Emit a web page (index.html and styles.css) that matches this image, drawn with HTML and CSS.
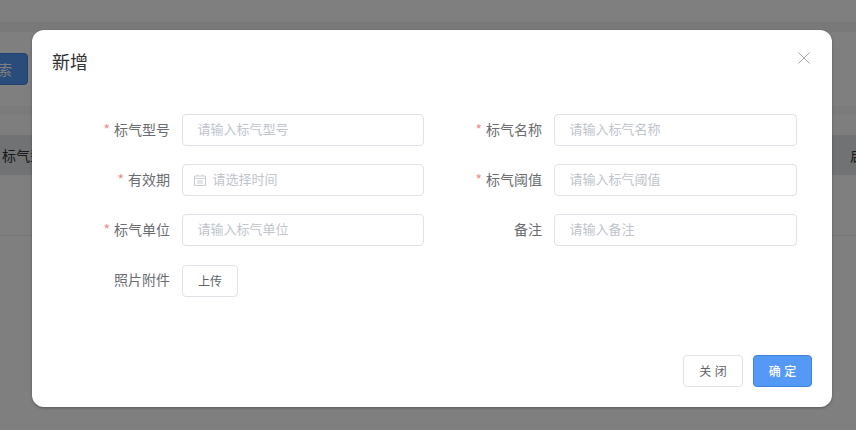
FILE: index.html
```html
<!DOCTYPE html>
<html lang="zh-CN">
<head>
<meta charset="utf-8">
<title>新增</title>
<link rel="stylesheet" href="styles.css">
</head>
<body>
<div class="page">
  <div class="topbar"></div>
  <div class="tabs"></div>
  <div class="toolbar"><button class="search-btn">搜索</button></div>
  <div class="divider"></div>
  <div class="table-gap"></div>
  <div class="table-head"><span class="th-left">标气型号</span><span class="th-right">启用状态</span></div>
  <div class="table-row"></div>
</div>
<div class="overlay"></div>
<div class="modal">
  <header class="modal-head">
    <h2 class="modal-title">新增</h2>
    <svg class="close-icon" width="12" height="12" viewBox="0 0 12 12"><path d="M.5.5l11 11M11.500.5l-11 11" stroke="#a3a6ab" stroke-width="1" fill="none"/></svg>
  </header>
  <form class="form">
    <div class="field"><label class="label req">标气型号</label><div class="input"><span class="ph">请输入标气型号</span></div></div>
    <div class="field"><label class="label req">标气名称</label><div class="input"><span class="ph">请输入标气名称</span></div></div>
    <div class="field"><label class="label req">有效期</label><div class="input date">
      <svg class="cal-icon" width="12" height="12" viewBox="0 0 12 12"><path d="M.5 2h11v9.500H.5zM.5 4.500h11M3.500.5V2M8.500.5V2M3 7h6M3 9h6" stroke="#c8cbd0" stroke-width="1" fill="none"/></svg>
      <span class="ph">请选择时间</span></div></div>
    <div class="field"><label class="label req">标气阈值</label><div class="input"><span class="ph">请输入标气阈值</span></div></div>
    <div class="field"><label class="label req">标气单位</label><div class="input"><span class="ph">请输入标气单位</span></div></div>
    <div class="field"><label class="label">备注</label><div class="input"><span class="ph">请输入备注</span></div></div>
    <div class="field"><label class="label">照片附件</label><button type="button" class="upload">上传</button></div>
  </form>
  <footer class="modal-foot">
    <button class="btn">关 闭</button>
    <button class="btn primary">确 定</button>
  </footer>
</div>
</body>
</html>
```
FILE: styles.css
```css
* { box-sizing: border-box; }
html, body { margin: 0; height: 100%; overflow: hidden; }
body {
  background: #fff;
  font-family: "Noto Sans CJK SC", "Liberation Sans", sans-serif;
  font-size: 14px;
  color: #606266;
}
.page { width: 856px; height: 430px; overflow: hidden; }
.topbar { height: 22px; background: #fff; }
.tabs { height: 10px; background: #f2f3f3; }
.toolbar {
  height: 74px;
  padding-top: 21px;
  background: #fff;
}
.search-btn {
  display: block;
  width: 60px;
  height: 32px;
  margin-left: -32px;
  background: #5399f5;
  border: 1px solid #3f82dc;
  border-radius: 4px;
  color: #fff;
  font: inherit;
  padding: 0;
  text-align: center;
}
.divider { height: 9px; background: #f6f6f6; }
.table-gap { height: 20px; background: #fcfcfc; }
.table-head {
  height: 40px;
  background: #e0e4e9;
  color: #333;
  display: flex;
  justify-content: space-between;
  align-items: center;
  padding-left: 2px;
  white-space: nowrap;
  line-height: 38px;
}
.th-right { margin-right: -50px; }
.table-row { height: 61px; background: #fff; border-bottom: 1px solid #e8e8e8; }
.overlay { position: absolute; inset: 0; background: rgba(0, 0, 0, .5); }
.modal {
  position: absolute;
  left: 32px;
  top: 30px;
  width: 800px;
  height: 377px;
  background: #fff;
  border-radius: 12px;
  box-shadow: 0 1px 3px rgba(0, 0, 0, .3);
  display: flex;
  flex-direction: column;
}
.modal-head {
  position: relative;
  height: 84px;
  padding: 18px 20px 0;
}
.modal-title {
  margin: 0;
  font-size: 18px;
  font-weight: 400;
  line-height: 26px;
  color: #303133;
}
.close-icon { position: absolute; right: 22px; top: 22px; }
.form {
  display: grid;
  grid-template-columns: 372px 373px;
  grid-auto-rows: 32px;
  row-gap: 18px;
  margin-left: 20px;
}
.field { display: flex; align-items: center; }
.label {
  width: 118px;
  margin-right: 12px;
  text-align: right;
  line-height: 30px;
  height: 32px;
  color: #6a6c70;
  flex: none;
}
.req::before { content: "*"; color: #f38a8a; margin-right: 4px; }
.input {
  flex: 1;
  height: 32px;
  padding: 0 14px 0 15px;
  border: 1px solid #dfe2e8;
  border-radius: 4px;
  display: flex;
  align-items: center;
  background: #fff;
}
.input.date { padding-left: 11px; }
.cal-icon { margin-right: 7px; flex: none; }
.ph { color: #c0c4cc; font-size: 13px; line-height: 28px; height: 30px; margin-left: -.5px; }
.upload {
  width: 56px;
  height: 32px;
  margin-top: 1px;
  padding: 0;
  background: #fff;
  border: 1px solid #dfe2e8;
  border-radius: 4px;
  font: inherit;
  font-size: 12px;
  color: #606266;
}
.modal-foot {
  margin-top: auto;
  display: flex;
  justify-content: flex-end;
  gap: 10px;
  padding: 0 20px 20px;
}
.btn {
  width: 60px;
  height: 32px;
  padding: 0 0 2px;
  background: #fff;
  border: 1px solid #dfe2e8;
  border-radius: 4px;
  font: inherit;
  font-size: 12px;
  word-spacing: 1px;
  color: #606266;
}
.btn.primary {
  width: 59px;
  background: #5399f5;
  border-color: #3f82dc;
  color: #fff;
  font-weight: 500;
}
```
